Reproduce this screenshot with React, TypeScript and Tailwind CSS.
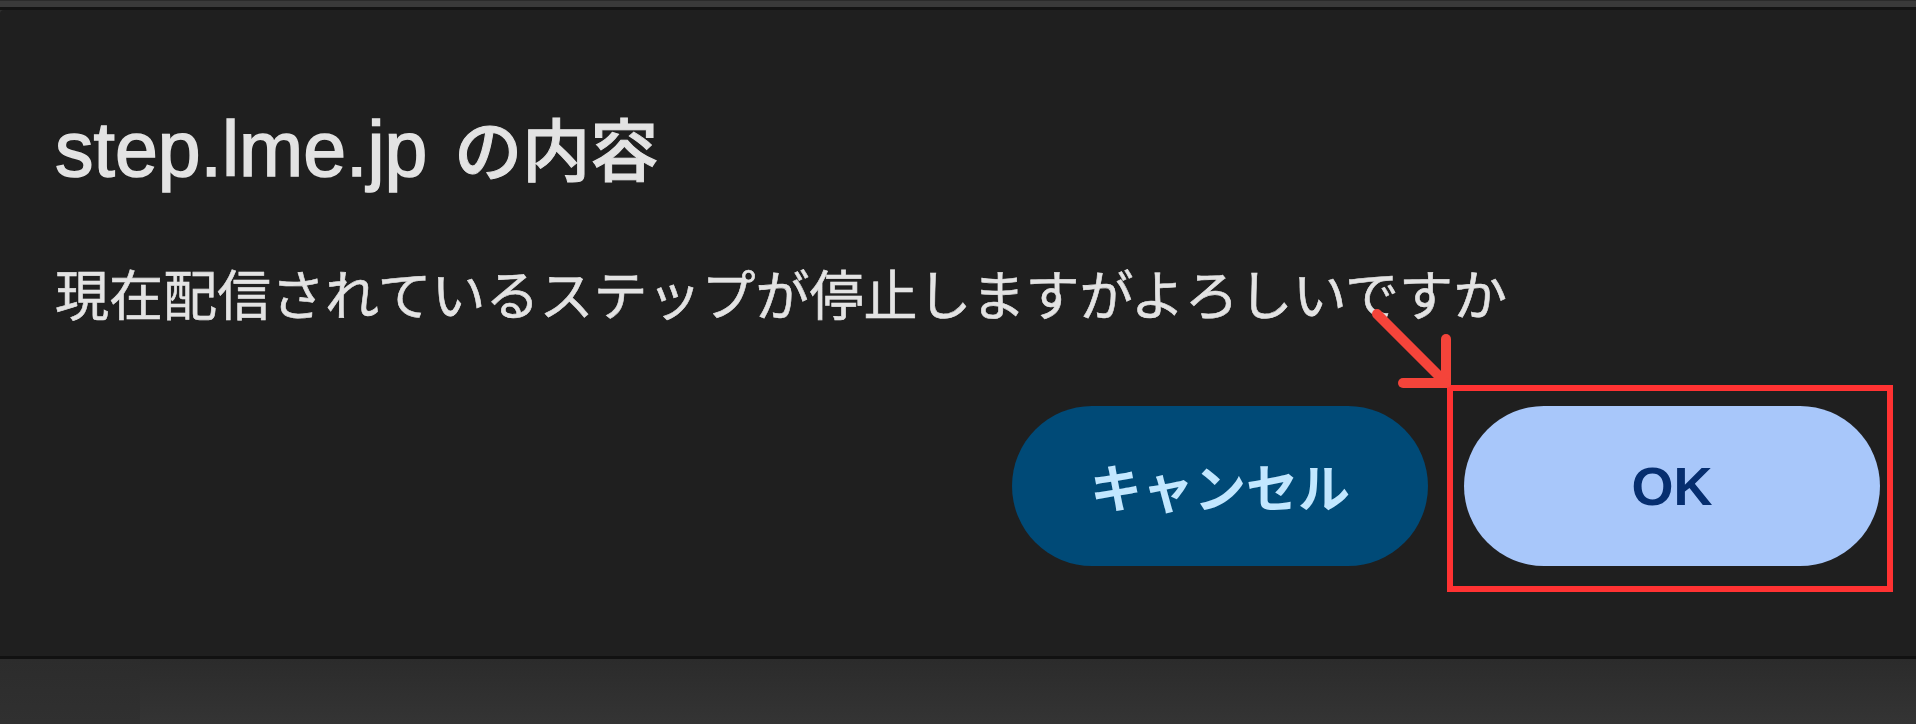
export default function App() {
  return (
    <div className="h-[724px] w-full flex flex-col overflow-hidden bg-[#2f2f2f]">
      {/* browser chrome strip above the dialog */}
      <div className="h-[7px] shrink-0 bg-[#3a3a3a] border-t border-[#2b2b2b]" />
      <div className="h-[3px] shrink-0 bg-[#141414]" />

      {/* dialog */}
      <div className="h-[646px] shrink-0 bg-[#1f1f1f] rounded-tl-[4px] flex flex-col pl-[55px] pr-[36px]">
        <h1 className="mt-[101px] flex items-baseline text-[#e3e3e3] leading-none">
          <span className="text-[77px] font-['Liberation_Sans',sans-serif] [-webkit-text-stroke:1.5px_#e3e3e3]">step.lme.jp</span>
          <span className="ml-[27px] text-[68px] font-medium font-['Noto_Sans_CJK_JP',sans-serif] [-webkit-text-stroke:1px_#e3e3e3]">の内容</span>
        </h1>

        <p className="mt-[78px] text-[54px] leading-[54px] text-[#e3e3e3] font-['Noto_Sans_CJK_JP',sans-serif] [-webkit-text-stroke:0.6px_#e3e3e3]">
          現在配信されているステップが停止しますがよろしいですか
        </p>

        <div className="mt-[86px] flex justify-end gap-[36px]">
          <button className="h-[160px] w-[416px] rounded-full bg-[#004a77] text-[#c2e7ff] text-[52px] font-bold font-['Noto_Sans_CJK_JP',sans-serif]">
            キャンセル
          </button>

          <div className="relative">
            <button className="h-[160px] w-[416px] rounded-full bg-[#a8c7fa] text-[#062e6f] text-[54px] font-bold font-['Liberation_Sans',sans-serif]">
              OK
            </button>
            {/* annotation: red box */}
            <div className="absolute left-[-17px] right-[-13px] top-[-21px] bottom-[-26px] border-[6px] border-[#ff3232] pointer-events-none" />
            {/* annotation: arrow */}
            <svg
              className="absolute left-[-95px] top-[-100px] pointer-events-none"
              width="90"
              height="90"
              viewBox="0 0 90 90"
              fill="none"
              stroke="#f4443a"
              strokeWidth="10"
              strokeLinecap="round"
              strokeLinejoin="round"
            >
              <path d="M8 8 L77 77" />
              <path d="M77 33 L77 77" />
              <path d="M34 77 L77 77" />
            </svg>
          </div>
        </div>
      </div>

      <div className="h-[3px] shrink-0 bg-[#111111]" />
      <div className="flex-1 flex">
        <div className="w-[140px] bg-gradient-to-b from-[#2c2c2c] to-[#303030]" />
        <div className="flex-1 bg-gradient-to-b from-[#2b2b2b] to-[#343434]" />
      </div>
    </div>
  )
}
